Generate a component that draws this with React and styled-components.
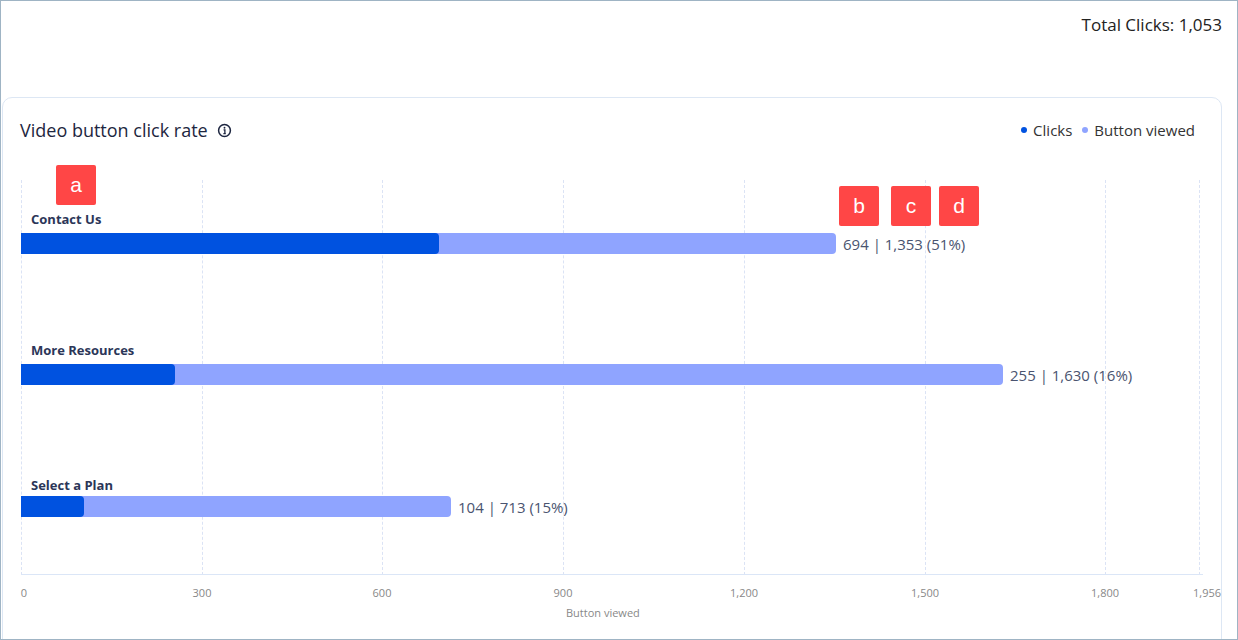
import React from "react";
import styled, { createGlobalStyle } from "styled-components";

const Global = createGlobalStyle`
  html,body{margin:0;padding:0;background:#fff;}
  body{font-family:"Open Sans","Noto Sans",sans-serif;}
`;
const Frame = styled.div`
  width:1238px;height:640px;box-sizing:border-box;border:1px solid #9fb4c4;
  position:relative;overflow:hidden;background:#fff;
`;
const Header = styled.div`
  height:96px;display:flex;justify-content:flex-end;padding:12px 15px 0 0;box-sizing:border-box;
  font-size:17px;color:#222;
`;
const Card = styled.div`
  margin-left:1px;width:1220px;height:560px;box-sizing:border-box;
  border:1px solid #dde7f4;border-radius:10px;position:relative;
`;
const TitleRow = styled.div`
  display:flex;justify-content:space-between;align-items:center;padding:20px 26px 0 17px;
`;
const Title = styled.div`
  font-size:18px;color:#1d2640;display:flex;align-items:center;gap:9px;
`;
const Legend = styled.div`display:flex;gap:10px;font-size:15px;color:#333;`;
const LegendItem = styled.span`
  display:flex;align-items:center;gap:6px;
  &::before{content:"";width:6px;height:6px;border-radius:50%;background:${p=>p.c};}
`;
const Plot = styled.div`position:absolute;left:18px;top:82px;width:1182px;height:395px;`;
const Grid = styled.div`
  position:absolute;top:0;bottom:0;left:${p=>p.x}px;border-left:1px dashed #dbe3f5;
`;
const Axis = styled.div`position:absolute;left:0;right:0;bottom:0;border-top:1px solid #dbe6f7;`;
const Label = styled.div`
  position:absolute;left:10px;top:${p=>p.y}px;font-size:13px;font-weight:700;color:#2b3658;
`;
const BarRow = styled.div`
  position:absolute;left:0;top:${p=>p.y}px;display:flex;align-items:center;gap:7px;
`;
const Bar = styled.div`height:21px;border-radius:0 4px 4px 0;background:#8fa4ff;position:relative;`;
const Fill = styled.div`position:absolute;left:0;top:0;bottom:0;background:#0052e0;border-radius:0 4px 4px 0;`;
const Value = styled.span`font-size:15px;color:#4a5470;`;
const Tick = styled.div`
  position:absolute;top:405px;left:${p=>p.x}px;transform:translateX(-50%);font-size:11px;color:#888;
`;
const AxisTitle = styled.div`position:absolute;top:425px;left:545px;font-size:11px;color:#888;`;
const Badge = styled.div`
  position:absolute;left:${p=>p.x}px;top:${p=>p.y}px;width:40px;height:40px;border-radius:2px;
  background:#ff4646;color:#fff;font-size:21px;display:flex;align-items:center;justify-content:center;
  font-family:"Liberation Sans",Arial,sans-serif;
`;

const S = 0.6024;
const rows = [
  { name: "Contact Us", c: 694, v: 1353, t: "694 | 1,353 (51%)", ly: 30, by: 53 },
  { name: "More Resources", c: 255, v: 1630, t: "255 | 1,630 (16%)", ly: 161, by: 184 },
  { name: "Select a Plan", c: 104, v: 713, t: "104 | 713 (15%)", ly: 296, by: 316 },
];
const ticks = [[0,"0"],[300,"300"],[600,"600"],[900,"900"],[1200,"1,200"],[1500,"1,500"],[1800,"1,800"],[1956,"1,956"]];

export default function App(){
  return (<>
    <Global/>
    <Frame>
      <Header>Total Clicks: 1,053</Header>
      <Card>
        <TitleRow>
          <Title>Video button click rate
            <svg width="15" height="15" viewBox="0 0 16 16"><circle cx="8" cy="8" r="6.3" fill="none" stroke="#1d2640" strokeWidth="1.6"/><circle cx="8" cy="5" r="1" fill="#1d2640"/><path d="M7 7.3h1.4v4M6.8 11.3h2.6" stroke="#1d2640" strokeWidth="1.4" fill="none"/></svg>
          </Title>
          <Legend><LegendItem c="#0052e0">Clicks</LegendItem><LegendItem c="#8fa4ff">Button viewed</LegendItem></Legend>
        </TitleRow>
        <Plot>
          {ticks.map(([v])=> <Grid key={v} x={Math.round(v*S)} />)}
          <Axis/>
          {rows.map(r=>(
            <React.Fragment key={r.name}>
              <Label y={r.ly}>{r.name}</Label>
              <BarRow y={r.by}>
                <Bar style={{width: Math.round(r.v*S)}}><Fill style={{width: Math.round(r.c*S)}}/></Bar>
                <Value>{r.t}</Value>
              </BarRow>
            </React.Fragment>
          ))}
          {ticks.map(([v,l])=> <Tick key={l} x={Math.round(v*S)+ (v===0?3:v===1956?8:0)}>{l}</Tick>)}
          <AxisTitle>Button viewed</AxisTitle>
        </Plot>
        <Badge x={53} y={67}>a</Badge>
        <Badge x={836} y={88}>b</Badge>
        <Badge x={888} y={88}>c</Badge>
        <Badge x={936} y={88}>d</Badge>
      </Card>
    </Frame>
  </>);
}
